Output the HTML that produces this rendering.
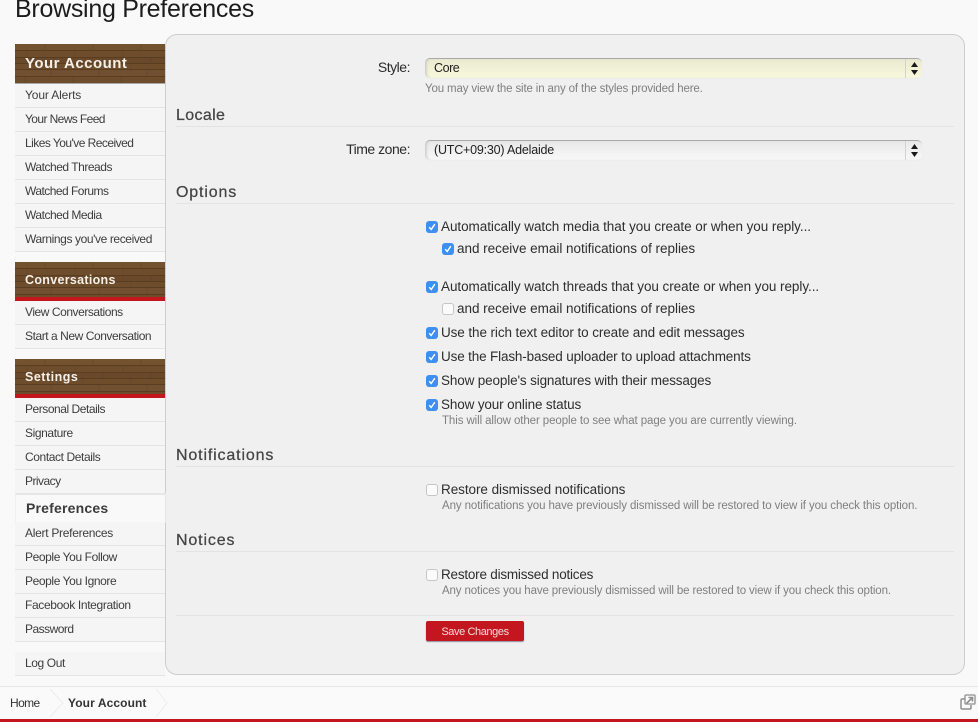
<!DOCTYPE html>
<html lang="en"><head><meta charset="utf-8"><title>Browsing Preferences</title>
<style>
html,body{margin:0;padding:0;width:978px;height:722px;overflow:hidden;background:#f9f9f9;font-family:"Liberation Sans","DejaVu Sans",sans-serif;color:#333}
.t{position:absolute;white-space:nowrap;line-height:20px;height:20px}
.h1{font-size:25px;color:#1c1c1c;left:15px;top:-6px;line-height:30px;height:30px;letter-spacing:-.28px}
.wood{position:absolute;left:15px;width:150px;height:39px;background-color:#6b4c2a;overflow:hidden}
.wood svg{position:absolute;left:0;top:0}
.wt{position:absolute;left:10px;color:#f4f0ea;font-weight:bold;white-space:nowrap;line-height:20px;letter-spacing:.3px}
.red{position:absolute;left:0;bottom:0;width:150px;height:4px;background:#c4161c}
.r{position:absolute;left:15px;width:150px;height:23px;background:#f5f5f5;border-bottom:1px solid #e4e4e4}
.r span{position:absolute;left:10px;top:1px;font-size:12px;line-height:20px;color:#3d3d3d;white-space:nowrap;letter-spacing:-.4px}
.panel{position:absolute;left:165px;top:34px;width:798px;height:639px;background:#f0f0f0;border:1px solid #cdcdcd;border-radius:12px}
.leg{font-size:16px;color:#454545;left:176px;letter-spacing:.85px;-webkit-text-stroke:.25px #454545}
.ln{position:absolute;left:176px;width:778px;height:1px;background:#e3e3e3}
.lab{font-size:14px;color:#2c2c2c;text-align:right;width:234px;left:176px;letter-spacing:-.48px}
.sel{position:absolute;left:425px;width:497px;height:19px;border-radius:5px;border-top:1px solid #a9a9a9;box-shadow:inset 3px 0 3px -2px #c0c0c0,0 1px 1px #ececec;overflow:hidden}
.sel b{position:absolute;left:9px;top:0;font-weight:normal;font-size:12.5px;line-height:19px;color:#222;letter-spacing:-.2px;white-space:nowrap}
.sel i{position:absolute;right:0;top:0;width:16px;height:19px;border-left:1px solid #d2d2d2}
.sel svg{position:absolute;left:4px;top:2px}
.c{font-size:13.5px;color:#2e2e2e;letter-spacing:-.056px}
.h{font-size:11.5px;color:#7f7f7f;letter-spacing:-.11px}
.cb{position:absolute;width:12px;height:12px;border-radius:3px}
.on{background:#3f8ff0}
.off{background:#fbfbfb;border:1px solid #c6c6c6;width:10px;height:10px}
.cb svg{position:absolute;left:0;top:0}
.btn{position:absolute;left:426px;top:621px;width:98px;height:20px;background:#c4161e;border-radius:2px;box-shadow:0 1px 1px #8a8a9a;color:#f6dcdc;font-size:11px;line-height:22px;text-align:center;letter-spacing:-.4px}
.foot{position:absolute;left:0;top:686px;width:978px;height:33px;background:#fafafa;border-top:1px solid #e6e6e6}
.bar{position:absolute;left:0;top:719px;width:978px;height:3px;background:#c4161e}
</style></head><body>
<svg width="0" height="0" style="position:absolute"><defs>
<pattern id="w" width="96" height="39" patternUnits="userSpaceOnUse">
<rect width="96" height="39" fill="#6d4d2b"/>
<rect y="0" width="96" height="6" fill="#73532f"/>
<rect y="14" width="96" height="5" fill="#694929"/>
<rect y="26" width="96" height="6" fill="#705030"/>
<g stroke="#4a3219" stroke-width="1"><path d="M0 6.500H96M0 13.500H96M0 19.500H96M0 25.500H96M0 32.500H96" opacity=".6"/></g>
<g stroke="#503820" opacity=".3"><path d="M30 0V6M78 0V6M12 7V13M60 7V13M40 14V19M88 14V19M20 20V25M68 20V25M36 26V32M84 26V32M10 33V39M58 33V39"/></g>
</pattern></defs></svg>

<div class="t h1">Browsing Preferences</div>
<div class="panel"></div>

<div class="wood" style="top:44px"><svg width="150" height="39"><rect width="150" height="39" fill="url(#w)"/></svg><div class="wt" style="top:10px;font-size:15px;letter-spacing:.47px">Your Account</div></div>
<div style="position:absolute;left:15px;top:83px;width:150px;height:1px;background:#a9a9a9"></div>
<div class="r" style="top:84px"><span style="letter-spacing:-.13px">Your Alerts</span></div>
<div class="r" style="top:108px"><span style="letter-spacing:-.6px">Your News Feed</span></div>
<div class="r" style="top:132px"><span style="letter-spacing:-.54px">Likes You've Received</span></div>
<div class="r" style="top:156px"><span style="letter-spacing:-.47px">Watched Threads</span></div>
<div class="r" style="top:180px"><span style="letter-spacing:-.53px">Watched Forums</span></div>
<div class="r" style="top:204px"><span style="letter-spacing:-.48px">Watched Media</span></div>
<div class="r" style="top:228px"><span>Warnings you've received</span></div>

<div class="wood" style="top:262px"><svg width="150" height="39"><rect width="150" height="39" fill="url(#w)"/></svg><div class="wt" style="top:8px;font-size:12.5px">Conversations</div><div class="red"></div></div>
<div class="r" style="top:301px"><span style="letter-spacing:-.45px">View Conversations</span></div>
<div class="r" style="top:325px"><span style="letter-spacing:-.44px">Start a New Conversation</span></div>

<div class="wood" style="top:359px"><svg width="150" height="39"><rect width="150" height="39" fill="url(#w)"/></svg><div class="wt" style="top:8px;font-size:12.5px;letter-spacing:.5px">Settings</div><div class="red"></div></div>
<div class="r" style="top:398px"><span style="letter-spacing:-.46px">Personal Details</span></div>
<div class="r" style="top:422px"><span>Signature</span></div>
<div class="r" style="top:446px"><span>Contact Details</span></div>
<div class="r" style="top:470px"><span style="letter-spacing:-.54px">Privacy</span></div>
<div style="position:absolute;left:15px;top:493px;width:149px;height:27px;background:#f9f9f9;border:1px solid #e6e6e6;border-top:2px solid #e6e6e6;border-left-color:#efefef"></div>
<div class="t" style="left:26px;top:498px;font-size:14px;font-weight:bold;color:#3c3c3c;letter-spacing:.2px">Preferences</div>
<div class="r" style="top:522px"><span style="letter-spacing:-.28px">Alert Preferences</span></div>
<div class="r" style="top:546px"><span>People You Follow</span></div>
<div class="r" style="top:570px"><span>People You Ignore</span></div>
<div class="r" style="top:594px"><span style="letter-spacing:-.35px">Facebook Integration</span></div>
<div class="r" style="top:618px"><span style="letter-spacing:-.52px">Password</span></div>
<div class="r" style="top:652px"><span>Log Out</span></div>

<div class="t lab" style="top:57px">Style:</div>
<div class="sel" style="top:58px;background:linear-gradient(#eaead0,#f8f8dc)"><b style="letter-spacing:-.45px">Core</b><i><svg width="9" height="15"><path d="M4.500 1L8 6H1zM4.500 14L1 9H8z" fill="#1a1a1a"/></svg></i></div>
<div class="t h" style="left:425px;top:79px;letter-spacing:-.145px">You may view the site in any of the styles provided here.</div>

<div class="t leg" style="top:106px;letter-spacing:.35px">Locale</div><div class="ln" style="top:126px"></div>
<div class="t lab" style="top:139px">Time zone:</div>
<div class="sel" style="top:140px;background:linear-gradient(#e8e8e8,#f8f8f8)"><b>(UTC+09:30) Adelaide</b><i><svg width="9" height="15"><path d="M4.500 1L8 6H1zM4.500 14L1 9H8z" fill="#1a1a1a"/></svg></i></div>

<div class="t leg" style="top:183px">Options</div><div class="ln" style="top:203px"></div>

<div class="cb on" style="left:426px;top:221px"><svg width="12" height="12"><path d="M3.200 6.200L5.200 8.500 8.800 3.200" fill="none" stroke="#fff" stroke-width="1.400"/></svg></div>
<div class="t c" style="left:441px;top:217px">Automatically watch media that you create or when you reply...</div>
<div class="cb on" style="left:442px;top:243px"><svg width="12" height="12"><path d="M3.200 6.200L5.200 8.500 8.800 3.200" fill="none" stroke="#fff" stroke-width="1.400"/></svg></div>
<div class="t c" style="left:457px;top:239px;letter-spacing:-.03px">and receive email notifications of replies</div>

<div class="cb on" style="left:426px;top:281px"><svg width="12" height="12"><path d="M3.200 6.200L5.200 8.500 8.800 3.200" fill="none" stroke="#fff" stroke-width="1.400"/></svg></div>
<div class="t c" style="left:441px;top:277px">Automatically watch threads that you create or when you reply...</div>
<div class="cb off" style="left:442px;top:303px"></div>
<div class="t c" style="left:457px;top:299px;letter-spacing:-.03px">and receive email notifications of replies</div>

<div class="cb on" style="left:426px;top:327px"><svg width="12" height="12"><path d="M3.200 6.200L5.200 8.500 8.800 3.200" fill="none" stroke="#fff" stroke-width="1.400"/></svg></div>
<div class="t c" style="left:441px;top:323px;letter-spacing:-.094px">Use the rich text editor to create and edit messages</div>
<div class="cb on" style="left:426px;top:351px"><svg width="12" height="12"><path d="M3.200 6.200L5.200 8.500 8.800 3.200" fill="none" stroke="#fff" stroke-width="1.400"/></svg></div>
<div class="t c" style="left:441px;top:347px;letter-spacing:-.155px">Use the Flash-based uploader to upload attachments</div>
<div class="cb on" style="left:426px;top:375px"><svg width="12" height="12"><path d="M3.200 6.200L5.200 8.500 8.800 3.200" fill="none" stroke="#fff" stroke-width="1.400"/></svg></div>
<div class="t c" style="left:441px;top:371px;letter-spacing:-.145px">Show people's signatures with their messages</div>
<div class="cb on" style="left:426px;top:399px"><svg width="12" height="12"><path d="M3.200 6.200L5.200 8.500 8.800 3.200" fill="none" stroke="#fff" stroke-width="1.400"/></svg></div>
<div class="t c" style="left:441px;top:395px;letter-spacing:-.14px">Show your online status</div>
<div class="t h" style="left:442px;top:411px;letter-spacing:-.095px">This will allow other people to see what page you are currently viewing.</div>

<div class="t leg" style="top:446px">Notifications</div><div class="ln" style="top:466px"></div>
<div class="cb off" style="left:426px;top:484px"></div>
<div class="t c" style="left:441px;top:480px">Restore dismissed notifications</div>
<div class="t h" style="left:442px;top:496px;letter-spacing:-.1px">Any notifications you have previously dismissed will be restored to view if you check this option.</div>

<div class="t leg" style="top:531px">Notices</div><div class="ln" style="top:551px"></div>
<div class="cb off" style="left:426px;top:569px"></div>
<div class="t c" style="left:441px;top:565px;letter-spacing:-.216px">Restore dismissed notices</div>
<div class="t h" style="left:442px;top:581px;letter-spacing:-.13px">Any notices you have previously dismissed will be restored to view if you check this option.</div>

<div class="ln" style="top:615px"></div>
<div class="btn">Save Changes</div>

<div class="foot"></div>
<div class="t" style="left:10px;top:693px;font-size:12px;color:#333;letter-spacing:-.6px">Home</div>
<svg style="position:absolute;left:48px;top:688px" width="120" height="30"><path d="M2 1L15 15 2 29M108 1L119 15 108 29" fill="none" stroke="#ececec" stroke-width="1"/></svg>
<div class="t" style="left:68px;top:693px;font-size:12px;font-weight:bold;color:#333;letter-spacing:.1px">Your Account</div>
<svg style="position:absolute;left:960px;top:694px" width="16" height="16"><path d="M5 5H2.200Q1 5 1 6.200V13.800Q1 15 2.200 15H9.800Q11 15 11 13.800V11" fill="none" stroke="#8f8f8f" stroke-width="1.500"/><path d="M5 1.800Q5 1 5.800 1H14.200Q15 1 15 1.800V9.200Q15 10 14.200 10H5.800Q5 10 5 9.200Z" fill="none" stroke="#8f8f8f" stroke-width="1.300"/><path d="M6.500 9.500L12 4M8.500 3.500H12.500V7.500" fill="none" stroke="#8f8f8f" stroke-width="1.600"/></svg>
<div class="bar"></div>
</body></html>
